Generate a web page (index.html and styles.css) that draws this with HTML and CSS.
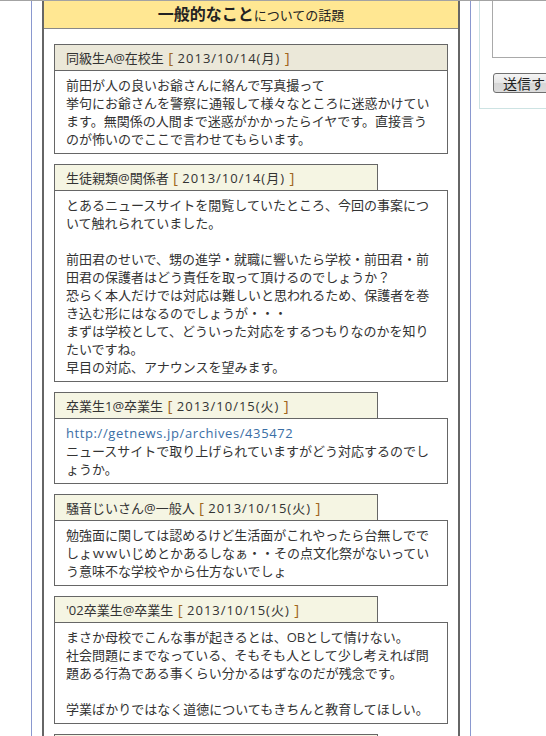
FILE: index.html
```html
<!DOCTYPE html>
<html lang="ja">
<head>
<meta charset="utf-8">
<title>一般的なこと</title>
<link rel="stylesheet" href="styles.css">
</head>
<body>
<div class="page">
  <div class="main">
    <div class="board">
      <div class="board-title"><strong>一般的なこと</strong>についての話題</div>
      <div class="board-body">
        <div class="post">
          <div class="post-head wide">同級生A@在校生 <span class="br">[</span> <span class="date">2013/10/14(月)</span> <span class="br">]</span></div>
          <div class="post-body">前田が人の良いお爺さんに絡んで写真撮って<br>挙句にお爺さんを警察に通報して様々なところに迷惑かけてい<br>ます。無関係の人間まで迷惑がかかったらイヤです。直接言う<br>のが怖いのでここで言わせてもらいます。</div>
        </div>
        <div class="post">
          <div class="post-head">生徒親類@関係者 <span class="br">[</span> <span class="date">2013/10/14(月)</span> <span class="br">]</span></div>
          <div class="post-body">とあるニュースサイトを閲覧していたところ、今回の事案につ<br>いて触れられていました。<br><br>前田君のせいで、甥の進学・就職に響いたら学校・前田君・前<br>田君の保護者はどう責任を取って頂けるのでしょうか？<br>恐らく本人だけでは対応は難しいと思われるため、保護者を巻<br>き込む形にはなるのでしょうが・・・<br>まずは学校として、どういった対応をするつもりなのかを知り<br>たいですね。<br>早目の対応、アナウンスを望みます。</div>
        </div>
        <div class="post">
          <div class="post-head">卒業生1@卒業生 <span class="br">[</span> <span class="date">2013/10/15(火)</span> <span class="br">]</span></div>
          <div class="post-body"><a class="link" href="#">http://getnews.jp/archives/435472</a><br>ニュースサイトで取り上げられていますがどう対応するのでし<br>ょうか。</div>
        </div>
        <div class="post">
          <div class="post-head">騒音じいさん@一般人 <span class="br">[</span> <span class="date">2013/10/15(火)</span> <span class="br">]</span></div>
          <div class="post-body">勉強面に関しては認めるけど生活面がこれやったら台無しでで<br>しょｗｗいじめとかあるしなぁ・・その点文化祭がないってい<br>う意味不な学校やから仕方ないでしょ</div>
        </div>
        <div class="post">
          <div class="post-head">'02卒業生@卒業生 <span class="br">[</span> <span class="date">2013/10/15(火)</span> <span class="br">]</span></div>
          <div class="post-body">まさか母校でこんな事が起きるとは、OBとして情けない。<br>社会問題にまでなっている、そもそも人として少し考えれば問<br>題ある行為である事くらい分かるはずなのだが残念です。<br><br>学業ばかりではなく道徳についてもきちんと教育してほしい。</div>
        </div>
        <div class="post">
          <div class="post-head">&nbsp;</div>
          <div class="post-body">&nbsp;</div>
        </div>
      </div>
    </div>
  </div>
  <div class="side">
    <div class="side-box">
      <textarea class="message"></textarea>
      <button class="send" type="button">送信する</button>
    </div>
  </div>
</div>
</body>
</html>
```

FILE: styles.css
```css
html, body {
  margin: 0;
  padding: 0;
}

body {
  border-top: 1px solid #a3a3a3;
  background: #fff;
  color: #333;
  font-family: "Open Sans", "Noto Sans CJK JP", sans-serif;
  overflow: hidden;
  height: 735px;
}

.page {
  display: flex;
  align-items: flex-start;
  padding-left: 31px;
}

.main {
  flex: none;
  border-left: 1px solid #8a98cf;
  border-right: 1px solid #8a98cf;
  padding: 0 10px;
  min-height: 735px;
}

.board {
  width: 414px;
  border-left: 2px solid #666;
  border-right: 2px solid #666;
  min-height: 735px;
}

.board-title {
  height: 27px;
  line-height: 26px;
  background: #ffe792;
  border-bottom: 1px solid #888;
  text-align: center;
  font-size: 13px;
  color: #222;
}

.board-title strong {
  font-size: 16px;
  font-weight: bold;
}

.board-body {
  padding: 15px 10px 0;
}

.post {
  margin-bottom: 10px;
}

.post-head {
  box-sizing: border-box;
  width: 324px;
  height: 26px;
  line-height: 24px;
  padding: 0 0 1px 11px;
  border: 1px solid #666;
  border-bottom: none;
  background: #f5f5e3;
  font-size: 13px;
  color: #333;
  white-space: nowrap;
}

.post-head.wide {
  width: auto;
  background: #ebe8d9;
}

.br {
  color: #a0661e;
  font-size: 15px;
  padding: 0 1px;
}

.date {
  letter-spacing: 1px;
}

.post-body {
  border: 1px solid #666;
  padding: 5px 11px;
  font-size: 13px;
  line-height: 18px;
  color: #333;
  line-break: normal;
}

.link {
  color: #3a6ea5;
  text-decoration: none;
  letter-spacing: 0.6px;
}

.side {
  flex: none;
  margin-left: 8px;
}

.side-box {
  width: 220px;
  border: 1px solid #cde3e3;
  border-top: none;
  padding: 0 0 15px 12px;
}

.message {
  display: block;
  box-sizing: border-box;
  width: 200px;
  height: 57px;
  margin: 0;
  padding: 0;
  border: 1px solid #a9a9a9;
  border-top: none;
  resize: none;
  background: #fff;
}

.send {
  display: block;
  box-sizing: border-box;
  height: 20px;
  margin: 15px 0 0 1px;
  padding: 0 8px 0 9px;
  border: 1px solid #707070;
  border-radius: 3px;
  background: linear-gradient(#f4f4f4, #e6e6e6 50%, #d6d6d6 51%, #dcdcdc);
  font-family: "Noto Sans CJK JP", sans-serif;
  font-size: 14px;
  line-height: 18px;
  color: #222;
}
```
